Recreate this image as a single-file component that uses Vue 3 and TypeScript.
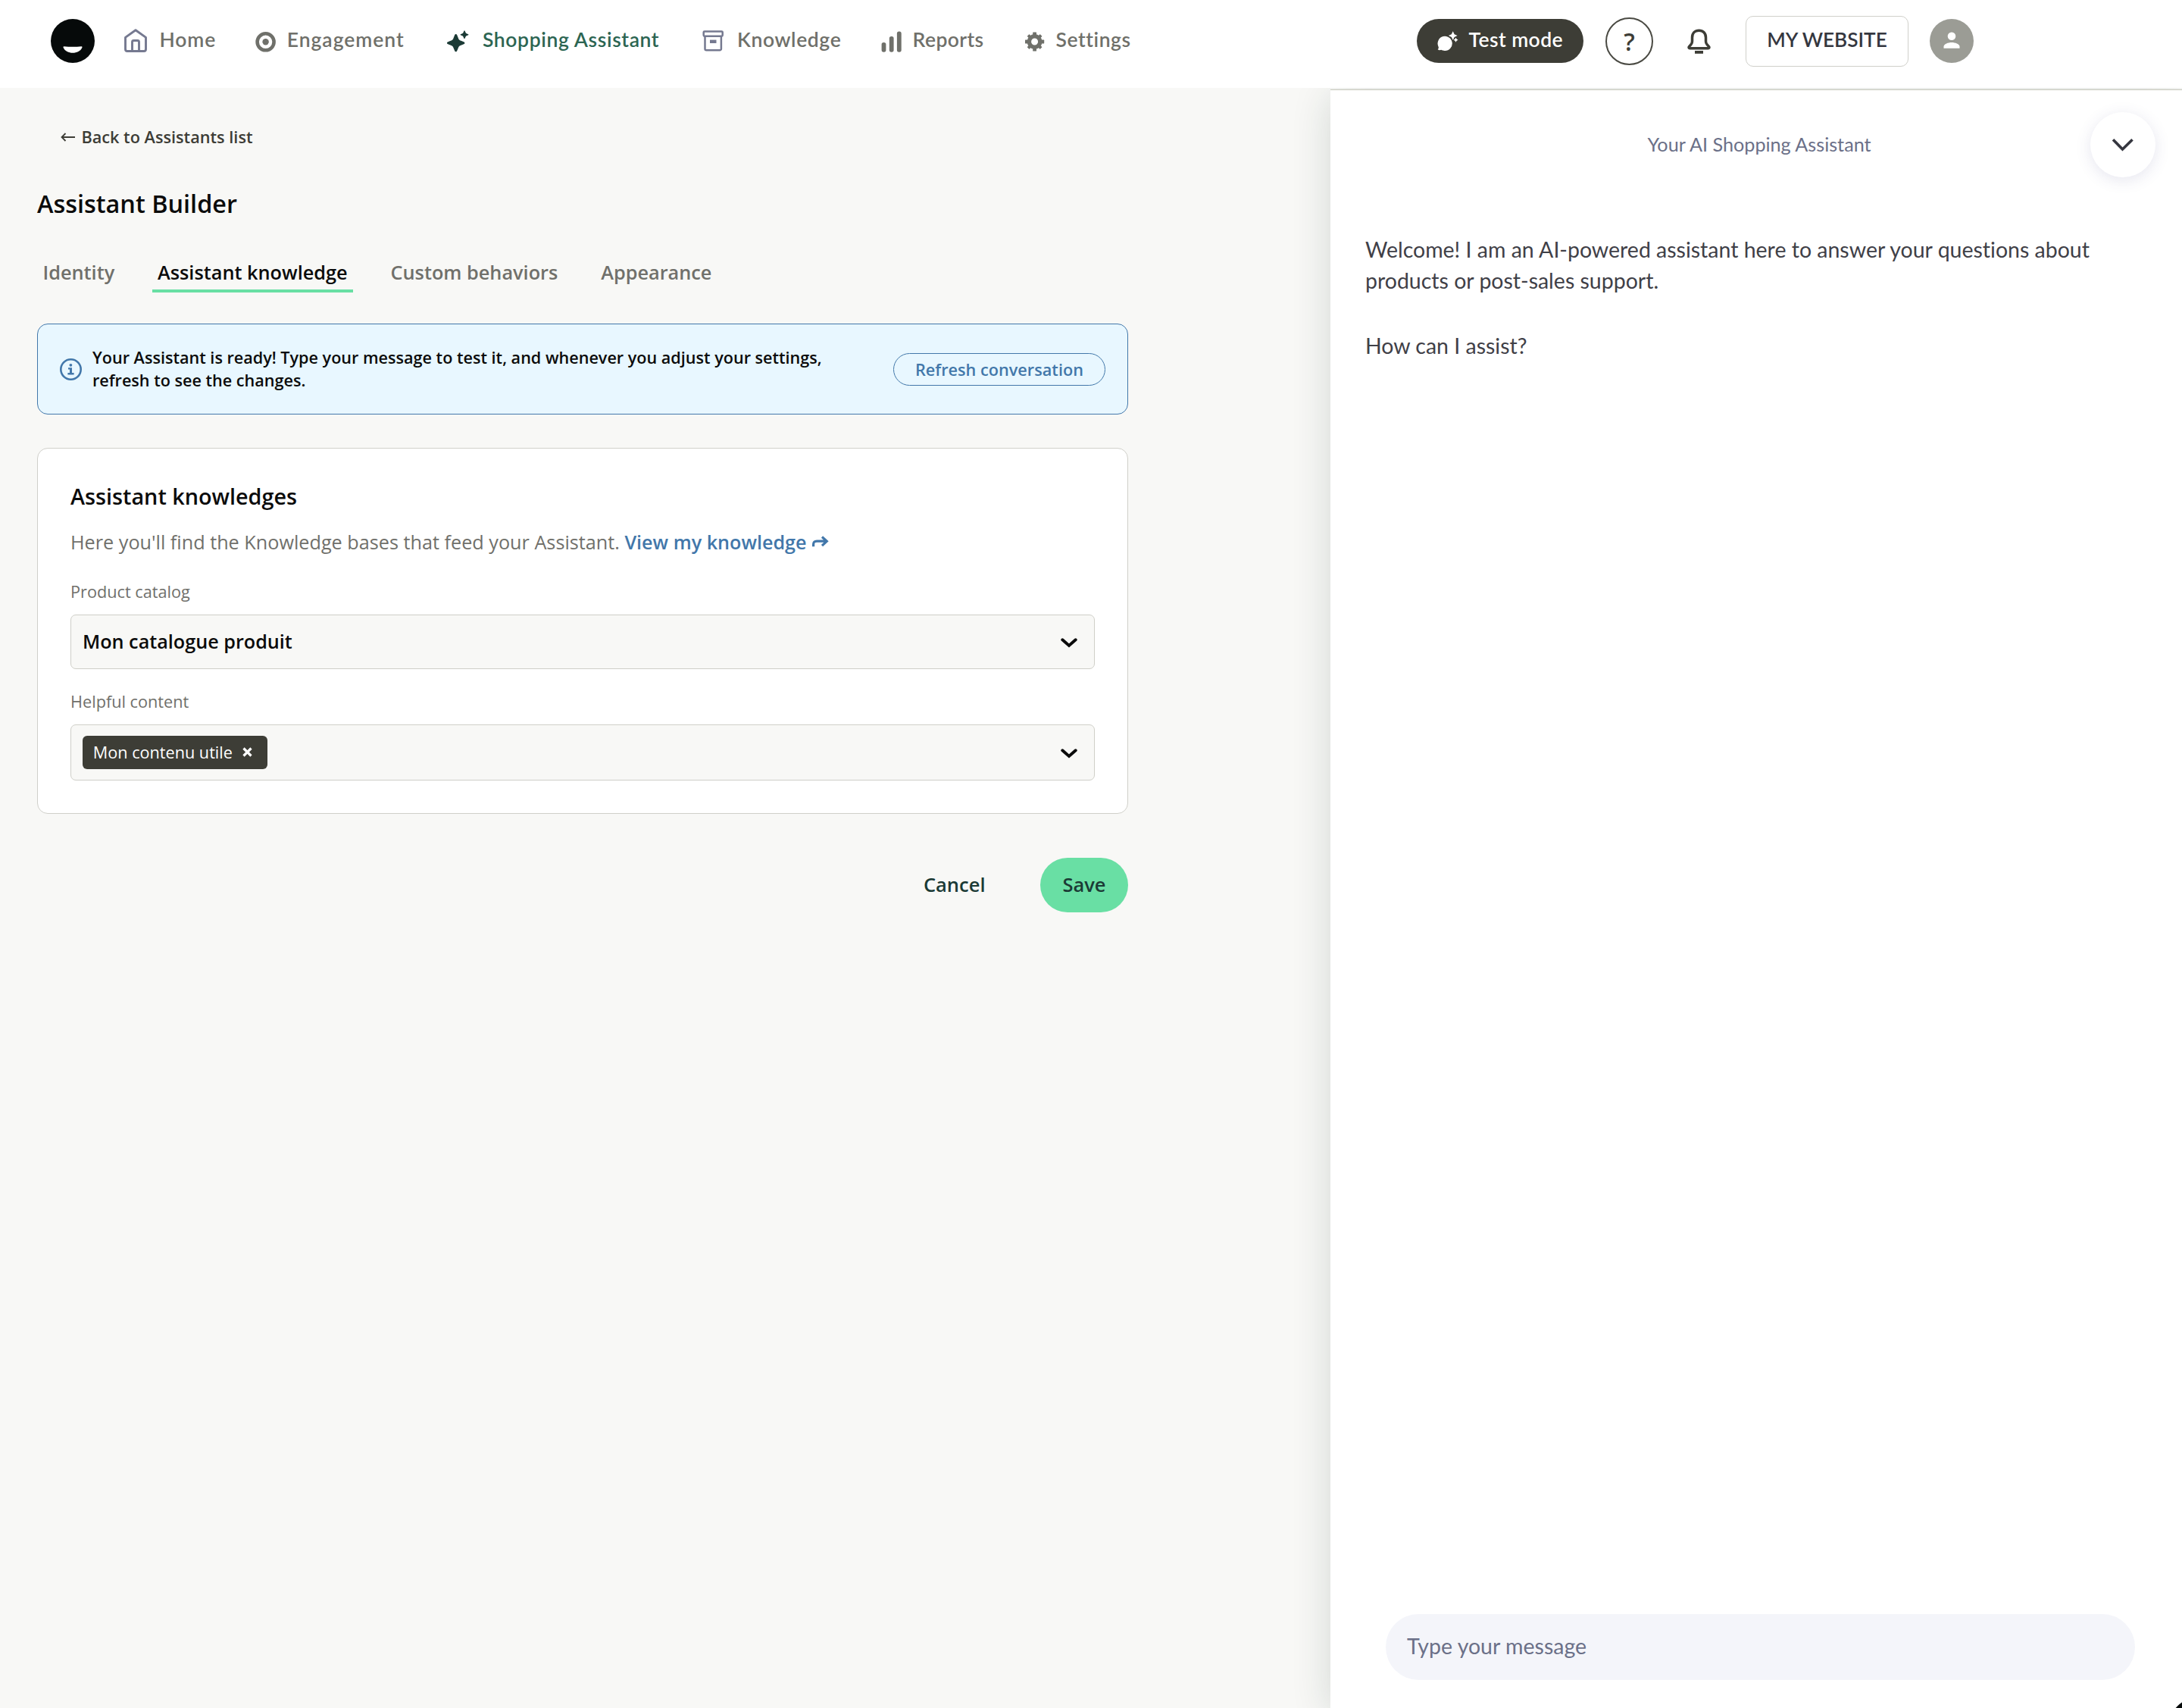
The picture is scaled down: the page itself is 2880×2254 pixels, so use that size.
<script setup lang="ts">
import { ref } from 'vue'

interface NavItem {
  key: string
  label: string
}

const navItems: NavItem[] = [
  { key: 'home', label: 'Home' },
  { key: 'engagement', label: 'Engagement' },
  { key: 'shopping', label: 'Shopping Assistant' },
  { key: 'knowledge', label: 'Knowledge' },
  { key: 'reports', label: 'Reports' },
  { key: 'settings', label: 'Settings' },
]
const activeNav = ref('shopping')

const tabs: string[] = ['Identity', 'Assistant knowledge', 'Custom behaviors', 'Appearance']
const activeTab = ref('Assistant knowledge')

const gearTeeth: number[] = [0, 90, 180, 270]
const gearNotches: number[] = [45, 135, 225, 315]

const message = ref('')
</script>

<template>
  <div class="page">
    <header class="topbar">
      <svg class="logo" viewBox="0 0 58 58">
        <circle cx="29" cy="29" r="29" fill="#060a0a" />
        <path d="M17.5 36.2q11.5 1.3 23 0c1 0 1.3.8.8 1.8-2 4.4-6.800 6.800-12.300 6.800s-10.300-2.400-12.300-6.800c-.5-1-.2-1.800.8-1.800z" fill="#fff" />
      </svg>

      <nav class="nav">
        <a
          v-for="item in navItems"
          :key="item.key"
          class="nav-item"
          :class="['nav-' + item.key, { active: activeNav === item.key }]"
          @click="activeNav = item.key"
        >
          <svg v-if="item.key === 'home'" class="nav-icon" viewBox="0 0 32 32" fill="none" stroke="#757990" stroke-width="2.900" stroke-linejoin="round">
            <path d="M2.500 11.400 16 1.800l13.500 9.600V27a2.500 2.500 0 0 1-2.500 2.500H5A2.500 2.500 0 0 1 2.500 27z" />
            <path d="M11.500 29.500v-12a2 2 0 0 1 2-2h5a2 2 0 0 1 2 2v12" />
          </svg>
          <svg v-else-if="item.key === 'engagement'" class="nav-icon" viewBox="0 0 32 32">
            <circle cx="15.600" cy="17.300" r="11" fill="none" stroke="#6f706a" stroke-width="4.600" />
            <circle cx="15.600" cy="17.300" r="4.200" fill="#6f706a" />
          </svg>
          <svg v-else-if="item.key === 'shopping'" class="nav-icon" viewBox="0 0 32 32" fill="#1b3a35" stroke="#1b3a35" stroke-width="1.200" stroke-linejoin="round">
            <path d="M13.700 7.700q.7 0 1 .9l2 4.900q.7 1.600 2.300 2.300l4.900 2q.9.300.9.900t-.9.900l-4.900 2q-1.600.7-2.300 2.300l-2 4.900q-.3.9-1 .9t-1-.9l-2-4.900q-.7-1.600-2.300-2.300l-4.900-2q-.9-.3-.9-.9t.9-.9l4.900-2q1.600-.7 2.300-2.300l2-4.900q.3-.9 1-.9z" />
            <path d="M25 2.900l1.500 3.300 3.300 1.500-3.300 1.500L25 12.500l-1.500-3.300-3.300-1.500 3.300-1.500z" />
          </svg>
          <svg v-else-if="item.key === 'knowledge'" class="nav-icon" viewBox="0 0 32 32" fill="none" stroke="#757990" stroke-width="2.500">
            <rect x="3.700" y="3.400" width="25" height="6.400" rx="1.200" />
            <path d="M5.500 9.800v16.600a1.800 1.800 0 0 0 1.800 1.800h17.800a1.800 1.800 0 0 0 1.800-1.800V9.800" />
            <rect x="12" y="14.600" width="8.500" height="4.400" fill="#757990" stroke="none" />
          </svg>
          <svg v-else-if="item.key === 'reports'" class="nav-icon" viewBox="0 0 32 32" fill="#6f706a">
            <rect x="2.600" y="18" width="5.800" height="12.700" rx="2.700" />
            <rect x="12.800" y="10" width="5.800" height="20.700" rx="2.700" />
            <rect x="22.900" y="3.500" width="5.800" height="27.200" rx="2.700" />
          </svg>
          <svg v-else class="nav-icon" viewBox="0 0 32 32">
            <g fill="#6f706a">
              <rect v-for="a in gearTeeth" :key="a" x="13.200" y="4.400" width="4.800" height="6" rx=".6" :transform="`rotate(${a} 15.600 17)`" />
              <rect v-for="a in gearNotches" :key="a" x="13.600" y="4.900" width="4" height="6" rx=".6" :transform="`rotate(${a} 15.600 17)`" />
            </g>
            <circle cx="15.600" cy="17" r="7.200" fill="none" stroke="#6f706a" stroke-width="5.400" />
          </svg>
          <span class="nav-label">{{ item.label }}</span>
        </a>
      </nav>

      <div class="tools">
        <button class="test-mode">
          <svg width="30" height="30" viewBox="0 0 30 30">
            <path d="M1.700 26.300c1.500-1.300 1.300-2.600.6-4.200A9.600 9.600 0 1 1 11 28c-2 0-3.400-.5-4.800-1.200-1.400.6-3 .7-4.500-.5z" fill="#fff" />
            <path d="M21.700 2.200l1.900 4 4 1.900-4 1.900-1.900 4-1.900-4-4-1.900 4-1.900z" fill="#fff" stroke="#3d3d36" stroke-width="2.400" paint-order="stroke" />
            <path d="M25.500 10.700l1.100 1.900 1.900 1.100-1.900 1.100-1.100 1.900-1.100-1.900-1.900-1.100 1.900-1.100z" fill="#fff" stroke="#3d3d36" stroke-width="1.200" paint-order="stroke" />
          </svg>
          <span>Test mode</span>
        </button>
        <button class="help">?</button>
        <svg class="bell" width="34" height="34" viewBox="0 0 34 34">
          <path d="M16.500 2.200c-5.500 0-9 3.800-9 9.200v5c0 1.900-.5 3-1.500 4.200l-2.600 3c-.8 1-.3 2.200 1 2.200h24.200c1.300 0 1.800-1.200 1-2.200l-2.600-3c-1-1.200-1.500-2.300-1.500-4.200v-5c0-5.400-3.500-9.200-9-9.200z" fill="none" stroke="#3d3d36" stroke-width="3.500" stroke-linejoin="round" />
          <rect x="11" y="29" width="11" height="3.800" fill="#3d3d36" />
        </svg>
        <button class="site">MY WEBSITE</button>
        <svg class="avatar" viewBox="0 0 58 58">
          <circle cx="29" cy="29" r="29" fill="#9b9c95" />
          <circle cx="29" cy="22.800" r="5.300" fill="#fff" />
          <path d="M18.500 38.700v-2.200c0-3.500 6-5.600 10.500-5.600s10.500 2.100 10.500 5.600v2.200z" fill="#fff" />
        </svg>
      </div>
    </header>

    <div class="body">
      <main class="builder">
        <a class="back">
          <svg width="20" height="12" viewBox="0 0 20 12" fill="none" stroke="#3d3d36" stroke-width="1.800">
            <path d="M19 6H2M6.500 1 1.500 6l5 5" />
          </svg>
          <span>Back to Assistants list</span>
        </a>
        <h1 class="title">Assistant Builder</h1>
        <div class="tabs">
          <a v-for="tab in tabs" :key="tab" class="tab" :class="{ current: tab === activeTab }" @click="activeTab = tab">{{ tab }}</a>
        </div>

        <section class="notice">
          <svg class="info" width="29" height="29" viewBox="0 0 29 29">
            <circle cx="14.500" cy="14.500" r="13.200" fill="none" stroke="#4277aa" stroke-width="2.600" />
            <circle cx="14.400" cy="8.800" r="1.900" fill="#4277aa" />
            <path d="M11 12.200h5v6.800h2.600v2.400h-8.200V19H13v-4.500h-2z" fill="#4277aa" />
          </svg>
          <p class="notice-text">
            Your Assistant is ready! Type your message to test it, and whenever you adjust your settings,<br />refresh to see the changes.
          </p>
          <button class="refresh">Refresh conversation</button>
        </section>

        <section class="card">
          <h2 class="card-title">Assistant knowledges</h2>
          <p class="card-desc">
            Here you'll find the Knowledge bases that feed your Assistant.
            <a class="link">View my knowledge<svg class="link-arrow" width="22" height="15" viewBox="0 0 22 15" fill="none" stroke="#4277aa" stroke-width="3.200"><path d="M1.600 14.300V11.500c0-3 1.500-4.400 4.500-4.400H18M13 1.500 19.300 7.200l-6.300 5.900" /></svg></a>
          </p>
          <label class="label">Product catalog</label>
          <div class="select">
            <span class="select-value">Mon catalogue produit</span>
            <svg class="chev" width="22" height="14" viewBox="0 0 22 14"><path d="M2.300 2.300 11 9.900l8.700-7.600" /></svg>
          </div>
          <label class="label second">Helpful content</label>
          <div class="select multi">
            <span class="tag">
              Mon contenu utile
              <svg width="13" height="13" viewBox="0 0 13 13"><path d="M1.500 1.500l10 10M11.500 1.500l-10 10" stroke="#fff" stroke-width="3.200" /></svg>
            </span>
            <svg class="chev" width="22" height="14" viewBox="0 0 22 14"><path d="M2.300 2.300 11 9.900l8.700-7.600" /></svg>
          </div>
        </section>

        <div class="actions">
          <button class="cancel">Cancel</button>
          <button class="save">Save</button>
        </div>
      </main>

      <aside class="preview">
        <div class="preview-head">
          <span class="preview-title">Your AI Shopping Assistant</span>
          <button class="collapse">
            <svg width="30" height="18" viewBox="0 0 30 18"><path d="M2 2.200 14.500 15 27.500 2.200" fill="none" stroke="#35363f" stroke-width="3.600" /></svg>
          </button>
        </div>
        <div class="messages">
          <p>Welcome! I am an AI-powered assistant here to answer your questions about<br />products or post-sales support.</p>
          <p>How can I assist?</p>
        </div>
        <input v-model="message" class="composer" placeholder="Type your message" />
      </aside>
    </div>
    <span class="launcher"></span>
  </div>
</template>

<style>
html,
body {
  margin: 0;
  background: #f8f8f6;
}
</style>

<style scoped>
.page {
  position: relative;
  width: 2880px;
  height: 2254px;
  overflow: hidden;
  display: flex;
  flex-direction: column;
  background: #f8f8f6;
  font-family: 'Open Sans', sans-serif;
  font-variant-ligatures: none;
  color: #0b0b0b;
}
.page * {
  box-sizing: border-box;
}
button {
  margin: 0;
  padding: 0;
  border: 0;
  background: none;
  font: inherit;
  font-variant-ligatures: none;
  color: inherit;
}
svg {
  display: block;
  flex: none;
}

/* Top bar */
.topbar {
  position: relative;
  z-index: 2;
  flex: none;
  display: flex;
  align-items: center;
  height: 116px;
  padding: 0 275px 8px 67px;
  background: #fff;
  font: 600 26.5px 'Lato', sans-serif;
}
.logo,
.avatar {
  width: 58px;
  height: 58px;
}
.nav {
  display: flex;
  margin-left: 38px;
}
.nav-item {
  display: flex;
  align-items: center;
  flex: none;
  color: #6f706a;
  white-space: nowrap;
}
.nav-icon {
  width: 32px;
  height: 32px;
}
.nav-label {
  padding-bottom: 4.6px;
  line-height: 36px;
}
.active {
  color: #2c6552;
}
.nav-home {
  width: 172px;
  gap: 15.6px;
  letter-spacing: 0.85px;
}
.nav-engagement {
  width: 253px;
  gap: 11.8px;
  letter-spacing: 0.95px;
}
.nav-shopping {
  width: 337px;
  gap: 17px;
  letter-spacing: 0.62px;
}
.nav-knowledge {
  width: 236px;
  gap: 16px;
  letter-spacing: 0.6px;
}
.nav-reports {
  width: 189px;
  gap: 11.6px;
  letter-spacing: 0.4px;
}
.nav-settings {
  gap: 11.6px;
  letter-spacing: 0.56px;
}
.tools {
  display: flex;
  align-items: center;
  margin-left: auto;
}
.test-mode {
  display: flex;
  align-items: center;
  width: 220px;
  height: 58px;
  padding-left: 26px;
  border-radius: 29px;
  background: #3d3d36;
  color: #fff;
  letter-spacing: 0.43px;
}
.test-mode span {
  margin-left: 12.5px;
  padding-bottom: 4.6px;
}
.help {
  width: 63px;
  height: 63px;
  margin-left: 29px;
  border: 2px solid #4a4a43;
  border-radius: 50%;
  color: #3d3d36;
  font: 600 32px 'Open Sans', sans-serif;
}
.bell {
  margin: 1px 44px 0 44px;
}
.site {
  width: 215px;
  height: 67px;
  padding-bottom: 5px;
  border: 1px solid #d0d0ca;
  border-radius: 10px;
  color: #35373f;
  font-size: 26.2px;
}
.avatar {
  margin-left: 28px;
}

/* Assistant builder */
.body {
  flex: 1;
  display: flex;
}
.builder {
  width: 1756px;
  padding: 49.600px 267px 0 49px;
  font-weight: 600;
}
.back {
  display: flex;
  align-items: center;
  gap: 7px;
  height: 30px;
  padding-left: 31.400px;
  color: #3d3d36;
  font-size: 21.7px;
  line-height: 30px;
}
.title {
  margin: 50.8px 0 49.6px;
  font-size: 32.4px;
  font-weight: 600;
  line-height: 44px;
}
.tabs {
  display: flex;
  gap: 41.8px;
  height: 46px;
}
.tab {
  padding: 0 7.5px;
  border-bottom: 4px solid transparent;
  color: #70706b;
  font-size: 25.3px;
  line-height: 38px;
}
.current {
  color: #0b0b0b;
  border-bottom-color: #69dfa4;
}
.notice {
  display: flex;
  align-items: center;
  height: 120px;
  margin-top: 41px;
  padding: 0 29px;
  border: 1px solid #4277aa;
  border-radius: 14px;
  background: #e8f7ff;
}
.info {
  margin-top: 1px;
}
.notice-text {
  margin: 0 0 0 14px;
  font-size: 21.6px;
  line-height: 30px;
  white-space: nowrap;
}
.refresh {
  width: 280px;
  height: 43px;
  margin: 1px 0 0 auto;
  padding-top: 1px;
  border: 1px solid #4277aa;
  border-radius: 22px;
  color: #4277aa;
  font-size: 21.7px;
  line-height: 30px;
}
.card {
  height: 483px;
  margin-top: 44px;
  padding: 42.6px 43px 0;
  border: 1px solid #d0d0ca;
  border-radius: 14px;
  background: #fff;
}
.card-title {
  margin: 0;
  font-size: 28.77px;
  font-weight: 600;
  line-height: 40px;
}
.card-desc {
  margin: 22.3px 0 32.7px;
  color: #70706b;
  font-size: 25.22px;
  font-weight: 400;
  line-height: 36px;
  white-space: nowrap;
}
.link {
  color: #4277aa;
  font-size: 25.16px;
  font-weight: 600;
}
.link-arrow {
  display: inline-block;
  margin-left: 7px;
  vertical-align: 3px;
}
.label {
  display: block;
  color: #70706b;
  font-size: 21.7px;
  font-weight: 400;
  line-height: 30px;
}
.second {
  margin-top: 27.6px;
}
.select {
  display: flex;
  align-items: center;
  justify-content: space-between;
  height: 72px;
  margin-top: 15.4px;
  padding: 0 22px 0 15px;
  border: 1px solid #cfcfc8;
  border-radius: 7px;
  background: #f8f8f6;
  font-size: 25.2px;
}
.select-value {
  padding-bottom: 2px;
}
.multi {
  height: 74px;
}
.chev {
  margin-top: 4px;
}
.chev path {
  fill: none;
  stroke: #0b0b0b;
  stroke-width: 4;
  stroke-linecap: round;
}
.tag {
  display: flex;
  align-items: center;
  gap: 13px;
  width: 244px;
  height: 44px;
  padding-left: 13.800px;
  border-radius: 6px;
  background: #3d3d36;
  color: #fff;
  font-size: 21.65px;
  font-weight: 400;
}
.actions {
  display: flex;
  justify-content: flex-end;
  align-items: center;
  margin-top: 58px;
  color: #1b3a35;
  font-size: 25.5px;
}
.cancel,
.save {
  padding-bottom: 1px;
}
.cancel {
  margin-right: 72.5px;
}
.save {
  width: 116px;
  height: 72px;
  border-radius: 36px;
  background: #69dfa4;
}

/* Conversation preview */
.preview {
  flex: 1;
  display: flex;
  flex-direction: column;
  margin-top: 2px;
  border-top: 1px solid #c6c7bb;
  background: #fff;
  box-shadow: 0 8px 48px rgba(18, 48, 40, 0.16);
  font-family: 'Lato', sans-serif;
}
.preview-head {
  display: flex;
  align-items: center;
  height: 143px;
  padding: 0 35px 0 129px;
}
.preview-title {
  flex: 1;
  padding-bottom: 1px;
  text-align: center;
  color: #6b7088;
  font-size: 25.2px;
  line-height: 32px;
}
.collapse {
  display: flex;
  align-items: center;
  justify-content: center;
  width: 86px;
  height: 86px;
  margin-top: 1px;
  border-radius: 50%;
  background: #fff;
  box-shadow: 0 4px 20px rgba(60, 60, 130, 0.13);
}
.messages {
  display: flex;
  flex-direction: column;
  gap: 44.5px;
  margin-top: 46.6px;
  padding-left: 46px;
  color: #3f4047;
  font-size: 28.49px;
  line-height: 41.500px;
  white-space: nowrap;
}
.messages p {
  margin: 0;
}
.composer {
  height: 87px;
  margin: auto 62px 37px 73px;
  padding: 0 28px 4px;
  border: 0;
  border-radius: 43.5px;
  background: #f4f5fa;
  font-family: inherit;
  font-size: 28.5px;
}
.composer::placeholder {
  color: #6b7088;
  opacity: 1;
}

/* Floating launcher, mostly outside the viewport */
.launcher {
  position: absolute;
  z-index: 3;
  left: 2862px;
  top: 2240px;
  width: 80px;
  height: 80px;
  border-radius: 50%;
  background: #060a0a;
}
</style>
